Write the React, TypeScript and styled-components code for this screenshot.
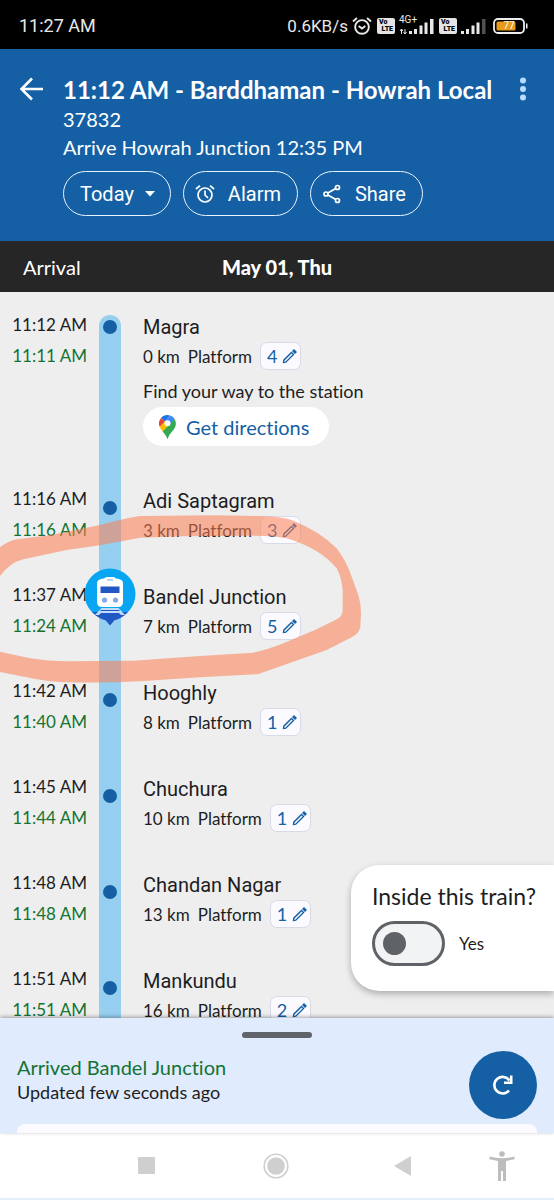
import React from "react";
import styled, { createGlobalStyle, css } from "styled-components";

const ui = `Lato, "Noto Sans", sans-serif`;
const roboto = `Roboto, "Noto Sans", sans-serif`;
const blue = "#1560a5";
const green = "#137333";

const GlobalStyle = createGlobalStyle`
  *, *::before, *::after { box-sizing: border-box; }
  body { margin: 0; background: #fff; }
  button { font: inherit; color: inherit; border: 0; padding: 0; background: none; cursor: pointer; }
  h1, h2, p { margin: 0; font-weight: 400; }
  svg { display: block; flex: none; }
`;

const Page = styled.div`
  display: flex;
  flex-direction: column;
  height: 100vh;
  font-family: ${ui};
  font-size: 18px;
  font-variant-ligatures: none;
  color: #1d1d1f;
`;

/* ---------- status bar ---------- */

const StatusBar = styled.div`
  display: flex;
  align-items: center;
  justify-content: space-between;
  flex: none;
  height: 49px;
  padding: 2px 26px 0 19px;
  background: #000;
  color: #e8e8e8;
  font-family: ${roboto};
  font-size: 18px;
`;

const StatusIcons = styled.div`
  display: flex;
  align-items: center;
  gap: 4px;
`;

const Speed = styled.span`
  font-size: 17px;
`;

const Volte = styled.span`
  display: flex;
  flex-direction: column;
  flex: none;
  justify-content: center;
  width: 18px;
  height: 16px;
  margin-left: 1px;
  padding: 0 2px;
  border-radius: 2px;
  background: #e4e4e4;
  color: #000;
  font-size: 7px;
  font-weight: 900;
  line-height: 7px;
`;

const VolteEnd = styled.span`
  align-self: flex-end;
`;

const Network = styled.span`
  position: relative;
`;

const NetworkLabel = styled.span`
  position: absolute;
  top: -3px;
  left: 0;
  font-size: 10px;
  line-height: 10px;
`;

const Battery = styled.span`
  position: relative;
  margin-left: 3px;
`;

const BatteryLevel = styled.span`
  position: absolute;
  inset: 0 3px 0 0;
  text-align: center;
  font-size: 10px;
  line-height: 16px;
  color: #fff;
`;

/* ---------- header ---------- */

const Header = styled.header`
  display: grid;
  grid-template-columns: 44px 1fr 24px;
  flex: none;
  padding: 26px 19px 25px;
  background: ${blue};
  color: #fff;
`;

const IconButton = styled.button`
  display: flex;
  align-items: center;
  height: 28px;
`;

const MenuButton = styled(IconButton)`
  justify-content: center;
`;

const Title = styled.h1`
  font-size: 24px;
  font-weight: 700;
  line-height: 30px;
  white-space: nowrap;
`;

const Subtitle = styled.p`
  font-size: 20px;
  line-height: 28px;
  white-space: nowrap;
`;

const Chips = styled.div`
  display: flex;
  gap: 12px;
  margin-top: 10px;
`;

const Chip = styled.button`
  display: flex;
  align-items: center;
  gap: 13px;
  height: 45px;
  padding: 0 16px 0 11px;
  border: 1px solid #e9f3ff;
  border-radius: 23px;
  font-family: ${roboto};
  font-size: 20px;
`;

const DayChip = styled(Chip)`
  gap: 11px;
  padding: 0 15px 0 16px;
`;

const DateBar = styled.div`
  position: relative;
  display: flex;
  align-items: center;
  justify-content: center;
  flex: none;
  height: 51px;
  background: #262626;
  color: #fff;
  font-size: 20px;
`;

const ArrivalLabel = styled.span`
  position: absolute;
  left: 23px;
`;

const DateLabel = styled.h2`
  font-size: 20px;
  font-weight: 900;
`;

/* ---------- timeline ---------- */

const Body = styled.main`
  position: relative;
  flex: 1;
  min-height: 0;
  background: #eeeeee;
`;

const Scroller = styled.div`
  height: 100%;
  overflow-y: auto;
  scrollbar-width: none;
`;

const Timeline = styled.div`
  position: relative;
  padding-top: 23px;
`;

const StopList = styled.ol`
  margin: 0;
  padding: 0;
  list-style: none;
`;

const StopRow = styled.li<{ $tall?: boolean }>`
  display: grid;
  grid-template-columns: 87px 22px 1fr;
  column-gap: 12px;
  min-height: ${(p) => (p.$tall ? 174 : 96)}px;
`;

const Times = styled.div`
  display: flex;
  flex-direction: column;
  gap: 11px;
  text-align: right;
  line-height: 20px;
  font-size: 17px;
  white-space: nowrap;
`;

const Actual = styled.span`
  color: ${green};
`;

const Rail = styled.div<{ $first?: boolean }>`
  position: relative;
  display: flex;
  justify-content: center;
  padding-top: ${(p) => (p.$first ? 5 : 12)}px;
  background: #96cfef;
  ${(p) =>
    p.$first &&
    css`
      border-radius: 11px 11px 0 0;
    `}
`;

const Dot = styled.span`
  width: 14px;
  height: 14px;
  border-radius: 50%;
  background: ${blue};
`;

const TrainPin = styled.svg`
  position: absolute;
  top: -17px;
  left: -15px;
`;

const Details = styled.div`
  padding-left: 10px;
`;

const StopName = styled.h2`
  font-family: ${roboto};
  font-size: 20px;
  line-height: 24px;
`;

const PlatformRow = styled.div`
  display: flex;
  align-items: center;
  gap: 8px;
  margin-top: 3px;
  font-size: 17px;
`;

const PlatformButton = styled.button`
  display: flex;
  align-items: center;
  gap: 5px;
  height: 28px;
  padding: 0 3px 0 6px;
  border: 1px solid #d8dae8;
  border-radius: 7px;
  background: #fbfbff;
  color: ${blue};
  font-size: 18px;
`;

const Hint = styled.p`
  margin-top: 11px;
  line-height: 20px;
`;

const Directions = styled.a`
  display: inline-flex;
  align-items: center;
  gap: 10px;
  height: 39px;
  margin-top: 6px;
  padding: 0 20px 0 16px;
  border-radius: 20px;
  background: #fff;
  color: ${blue};
  font-size: 20px;
  text-decoration: none;
`;

const Marker = styled.svg`
  position: absolute;
  top: 178px;
  left: 0;
  pointer-events: none;
`;

/* ---------- inside-train card ---------- */

const InsideCard = styled.section`
  position: absolute;
  right: 0;
  bottom: 27px;
  min-width: 203px;
  padding: 18px 14px 25px 21px;
  border-radius: 28px 0 0 28px;
  background: #fff;
  box-shadow: 0 3px 7px rgba(0, 0, 0, 0.28);
`;

const InsideTitle = styled.h2`
  font-size: 23px;
  line-height: 26px;
  white-space: nowrap;
`;

const ToggleLabel = styled.label`
  display: flex;
  align-items: center;
  gap: 14px;
  margin-top: 12px;
  font-size: 17px;
`;

const Toggle = styled.input`
  appearance: none;
  display: flex;
  align-items: center;
  width: 73px;
  height: 45px;
  margin: 0;
  padding: 0 8px;
  border: 3px solid #5f6368;
  border-radius: 23px;
  background: #f1f3f5;

  &::before {
    content: "";
    width: 23px;
    height: 23px;
    border-radius: 50%;
    background: #5f6368;
  }

  &:checked {
    justify-content: flex-end;
  }
`;

/* ---------- bottom sheet ---------- */

const Sheet = styled.section`
  position: relative;
  display: flex;
  flex-direction: column;
  flex: none;
  padding: 14px 17px 0;
  background: #e0ebfd;
  box-shadow: 0 -1px 4px rgba(0, 0, 0, 0.35);
`;

const Handle = styled.span`
  align-self: center;
  width: 70px;
  height: 6px;
  border-radius: 3px;
  background: #60636c;
`;

const SheetRow = styled.div`
  display: flex;
  align-items: center;
  justify-content: space-between;
  margin-top: 13px;
`;

const Arrived = styled.h2`
  color: ${green};
  font-size: 20px;
  line-height: 26px;
`;

const Updated = styled.p`
  margin-bottom: 12px;
  line-height: 24px;
`;

const Refresh = styled.button`
  display: flex;
  align-items: center;
  justify-content: center;
  width: 68px;
  height: 68px;
  border-radius: 50%;
  background: ${blue};
`;

const NextCard = styled.div`
  height: 9px;
  margin-top: 5px;
  border-radius: 8px 8px 0 0;
  background: #fafaff;
`;

const SystemNav = styled.nav`
  display: grid;
  grid-template-columns: 80px 132px 127px 127px 1fr 16px;
  flex: none;
  height: 67px;
  border-bottom: 2px solid #e4eefd;
  background: #fff;
`;

const NavButton = styled.button`
  display: flex;
  align-items: center;
  justify-content: center;

  &:first-of-type {
    grid-column: 2;
  }
`;

type Stop = {
  name: string;
  due: string;
  actual: string;
  km: number;
  platform: number;
  current?: boolean;
};

const stops: Stop[] = [
  { name: "Magra", due: "11:12 AM", actual: "11:11 AM", km: 0, platform: 4 },
  { name: "Adi Saptagram", due: "11:16 AM", actual: "11:16 AM", km: 3, platform: 3 },
  { name: "Bandel Junction", due: "11:37 AM", actual: "11:24 AM", km: 7, platform: 5, current: true },
  { name: "Hooghly", due: "11:42 AM", actual: "11:40 AM", km: 8, platform: 1 },
  { name: "Chuchura", due: "11:45 AM", actual: "11:44 AM", km: 10, platform: 1 },
  { name: "Chandan Nagar", due: "11:48 AM", actual: "11:48 AM", km: 13, platform: 1 },
  { name: "Mankundu", due: "11:51 AM", actual: "11:51 AM", km: 16, platform: 2 },
];

const AlarmOutline = () => (
  <svg width="20" height="20" viewBox="0 0 20 20" fill="none" stroke="currentColor" strokeWidth="1.7">
    <circle cx="10" cy="11" r="7" />
    <path d="M10 6.5V11l3 3M1 5l4-3.4M19 5l-4-3.4" />
  </svg>
);

const StatusAlarm = () => (
  <svg width="20" height="20" viewBox="0 0 21 20" fill="none" stroke="currentColor" strokeWidth="2">
    <circle cx="10.5" cy="11" r="7.2" />
    <path d="M7 10l3.5 2.6L14 10M1 5.2l4.2-3.6M20 5.2l-4.2-3.6" />
  </svg>
);

const Pencil = () => (
  <svg width="15" height="15" viewBox="0 0 15 15" fill="none" stroke="currentColor" strokeWidth="1.4">
    <path d="M1.500 13.500l.3-2.300L9.500 3.500l2 2-7.700 7.700z" />
    <path d="M11 2l1-1 2 2-1 1z" fill="currentColor" />
  </svg>
);

const MapsPin = () => (
  <svg width="17" height="24" viewBox="0 0 17 24">
    <path d="M8.500 0C5.700 0 3.500 1.200 2 3l4 3.500L11 .4A8.500 8.500 0 0 0 8.500 0z" fill="#1a73e8" />
    <path d="M2 3A8.300 8.300 0 0 0 .8 12L6 6.500z" fill="#ea4335" />
    <path d="M11 .4L5.800 6.500 11 10.500 15.700 4A8.500 8.500 0 0 0 11 .4z" fill="#4285f4" />
    <path d="M.8 12c.6 1.500 1.700 2.900 2.900 4.400L11 10.500 6 6z" fill="#fbbc04" />
    <path d="M15.700 4L3.700 16.400C5.500 18.600 7.500 21 8 23.200c.2 1 .8 1 1 0 .9-4 4-6 6-9.200C17.400 10.500 17.300 7 15.700 4z" fill="#34a853" />
    <circle cx="8.500" cy="8.300" r="3" fill="#fff" />
  </svg>
);

const Train = () => (
  <TrainPin width="52" height="60" viewBox="0 0 52 60" role="img" aria-label="Train is here">
    <circle cx="26" cy="26" r="25.500" fill="#08a5f2" />
    <path d="M8 44C12.500 49 17 51 21.500 52.300L26 57.500l4.500-5.200C35 51 39.500 49 44 44z" fill="#2159c4" />
    <path d="M17.500 40h17l6.500 7h-4L35 45H17l-2 2h-4z" fill="#c3dcfb" />
    <path d="M16.500 42.500h19" stroke="#2159c4" />
    <path d="M13 15q0-3 4-4l3-.5q1-1.500 3-1.500h6q2 0 3 1.500l3 .5q4 1 4 4v19q0 5-5 5H18q-5 0-5-5z" fill="#fff" />
    <path d="M23 12h6" stroke="#9cc9f2" strokeWidth="1.500" />
    <path d="M16.500 18.500h19v6.500h-19z" fill="#2159c4" />
    <circle cx="20.500" cy="32" r="2.600" fill="#82a8ea" />
    <circle cx="31.500" cy="32" r="2.600" fill="#82a8ea" />
  </TrainPin>
);

const Bars = ({ weak, data }: { weak?: boolean; data?: boolean }) => (
  <svg width={data ? 35 : 25} height="16" viewBox={data ? "-10 0 35 16" : "0 0 25 16"} fill="currentColor">
    <path d="M0 13h3v3H0zM5 11h3v5H5zM10.500 7.500h3V16h-3zM15.500 4.500h3V16h-3z" />
    <path d="M21 1h3.500v15H21z" opacity={weak ? 0.35 : 1} />
    {data && <path d="M-7.500 11v5M-9 13l1.500-2 1.500 2M-4 16v-5M-5.500 14L-4 16l1.500-2" stroke="currentColor" fill="none" />}
  </svg>
);

const VolteBadge = () => (
  <Volte>
    <span>Vo</span>
    <VolteEnd>LTE</VolteEnd>
  </Volte>
);

export default function App() {
  return (
    <Page>
      <GlobalStyle />
      <StatusBar>
        <span>11:27 AM</span>
        <StatusIcons>
          <Speed>0.6KB/s</Speed>
          <StatusAlarm />
          <VolteBadge />
          <Network>
            <NetworkLabel>4G+</NetworkLabel>
            <Bars data />
          </Network>
          <VolteBadge />
          <Bars weak />
          <Battery>
            <svg width="35" height="16" viewBox="0 0 35 16">
              <rect x="1" y="1" width="30" height="14" rx="4" fill="none" stroke="#eee" strokeWidth="1.800" />
              <rect x="3.500" y="3.500" width="19" height="9" rx="1.500" fill="#e79a1c" />
              <path d="M33 5.500h1.500v5H33z" fill="#eee" />
            </svg>
            <BatteryLevel>77</BatteryLevel>
          </Battery>
        </StatusIcons>
      </StatusBar>

      <Header>
        <IconButton aria-label="Back">
          <svg width="25" height="24" viewBox="0 0 25 24" fill="none" stroke="currentColor" strokeWidth="2.600">
            <path d="M24 12H3M13 1.500L2.500 12 13 22.500" />
          </svg>
        </IconButton>
        <div>
          <Title>11:12 AM - Barddhaman - Howrah Local</Title>
          <Subtitle>37832</Subtitle>
          <Subtitle>Arrive Howrah Junction 12:35 PM</Subtitle>
          <Chips>
            <DayChip>
              Today
              <svg width="10" height="6" viewBox="0 0 10 6" fill="currentColor">
                <path d="M0 0h10L5 5.500z" />
              </svg>
            </DayChip>
            <Chip>
              <AlarmOutline />
              Alarm
            </Chip>
            <Chip>
              <svg width="20" height="20" viewBox="0 0 20 20" fill="none" stroke="currentColor" strokeWidth="1.700">
                <circle cx="4" cy="10" r="2" />
                <circle cx="15.500" cy="3.500" r="2" />
                <circle cx="15.500" cy="16.500" r="2" />
                <path d="M5.800 9l8-4.500M5.800 11l8 4.500" />
              </svg>
              Share
            </Chip>
          </Chips>
        </div>
        <MenuButton aria-label="More options">
          <svg width="6" height="24" viewBox="0 0 6 24" fill="#b9dcff">
            <circle cx="3" cy="3.500" r="3" />
            <circle cx="3" cy="12" r="3" />
            <circle cx="3" cy="20.500" r="3" />
          </svg>
        </MenuButton>
      </Header>

      <DateBar>
        <ArrivalLabel>Arrival</ArrivalLabel>
        <DateLabel>May 01, Thu</DateLabel>
      </DateBar>

      <Body>
        <Scroller>
          <Timeline>
            <StopList>
              {stops.map((s, i) => (
                <StopRow key={s.name} $tall={i === 0}>
                  <Times>
                    <span>{s.due}</span>
                    <Actual>{s.actual}</Actual>
                  </Times>
                  <Rail $first={i === 0}>{s.current ? <Train /> : <Dot />}</Rail>
                  <Details>
                    <StopName>{s.name}</StopName>
                    <PlatformRow>
                      <span>{s.km} km</span>
                      <span>Platform</span>
                      <PlatformButton aria-label={`Edit platform ${s.platform}`}>
                        {s.platform}
                        <Pencil />
                      </PlatformButton>
                    </PlatformRow>
                    {i === 0 && (
                      <>
                        <Hint>Find your way to the station</Hint>
                        <Directions href="#directions">
                          <MapsPin />
                          Get directions
                        </Directions>
                      </>
                    )}
                  </Details>
                </StopRow>
              ))}
            </StopList>
            <Marker width="370" height="230" viewBox="0 0 1110 690" aria-hidden="true">
              <path
                fill="rgba(254,125,80,0.55)"
                d="M0 232Q20 215 50 208L150 196L300 165Q370 146 420 138L640 136L780 138Q850 140 880 152Q960 184 1010 235Q1040 275 1055 320L1075 375Q1083 400 1083 430L1081 470Q1078 490 1055 502L980 540L880 575L775 612L600 622L420 634Q300 640 180 636Q120 632 80 622L0 606V545L90 565Q150 574 200 574L400 572L600 558L760 548Q800 540 850 520L950 478L1010 448Q1027 440 1028 420V360Q1024 320 1010 295Q960 235 860 205Q820 196 750 197L550 199L420 203L300 226L200 240L70 268Q30 278 0 318Z"
              />
            </Marker>
          </Timeline>
        </Scroller>
        <InsideCard>
          <InsideTitle>Inside this train?</InsideTitle>
          <ToggleLabel>
            <Toggle type="checkbox" role="switch" />
            Yes
          </ToggleLabel>
        </InsideCard>
      </Body>

      <Sheet>
        <Handle />
        <SheetRow>
          <div>
            <Arrived>Arrived Bandel Junction</Arrived>
            <Updated>Updated few seconds ago</Updated>
          </div>
          <Refresh aria-label="Refresh">
            <svg width="20" height="20" viewBox="0 0 20 20" fill="none" stroke="#fff" strokeWidth="2.600">
              <path d="M16 15.500A8.300 8.300 0 1 1 16.500 5.500" />
              <path d="M11 7.700H18.200V.5" />
            </svg>
          </Refresh>
        </SheetRow>
        <NextCard />
      </Sheet>

      <SystemNav>
        <NavButton aria-label="Recent apps">
          <svg width="17" height="17" viewBox="0 0 17 17">
            <rect width="17" height="17" rx="1" fill="#cfcfcf" />
          </svg>
        </NavButton>
        <NavButton aria-label="Home">
          <svg width="26" height="26" viewBox="0 0 26 26">
            <circle cx="13" cy="13" r="11.800" fill="none" stroke="#cfcfcf" strokeWidth="1.600" />
            <circle cx="13" cy="13" r="8.800" fill="#cfcfcf" />
          </svg>
        </NavButton>
        <NavButton aria-label="Back">
          <svg width="17" height="20" viewBox="0 0 17 20">
            <path d="M17 0v20L0 10z" fill="#cfcfcf" />
          </svg>
        </NavButton>
        <NavButton aria-label="Accessibility">
          <svg width="26" height="30" viewBox="0 0 26 30" fill="#bdbdbd">
            <circle cx="13" cy="3" r="2.800" />
            <path d="M.5 5.500Q13 9 25.500 5.500v2.800L17 10v20h-3V20h-2v10H9V10L.5 8.300z" />
          </svg>
        </NavButton>
      </SystemNav>
    </Page>
  );
}
